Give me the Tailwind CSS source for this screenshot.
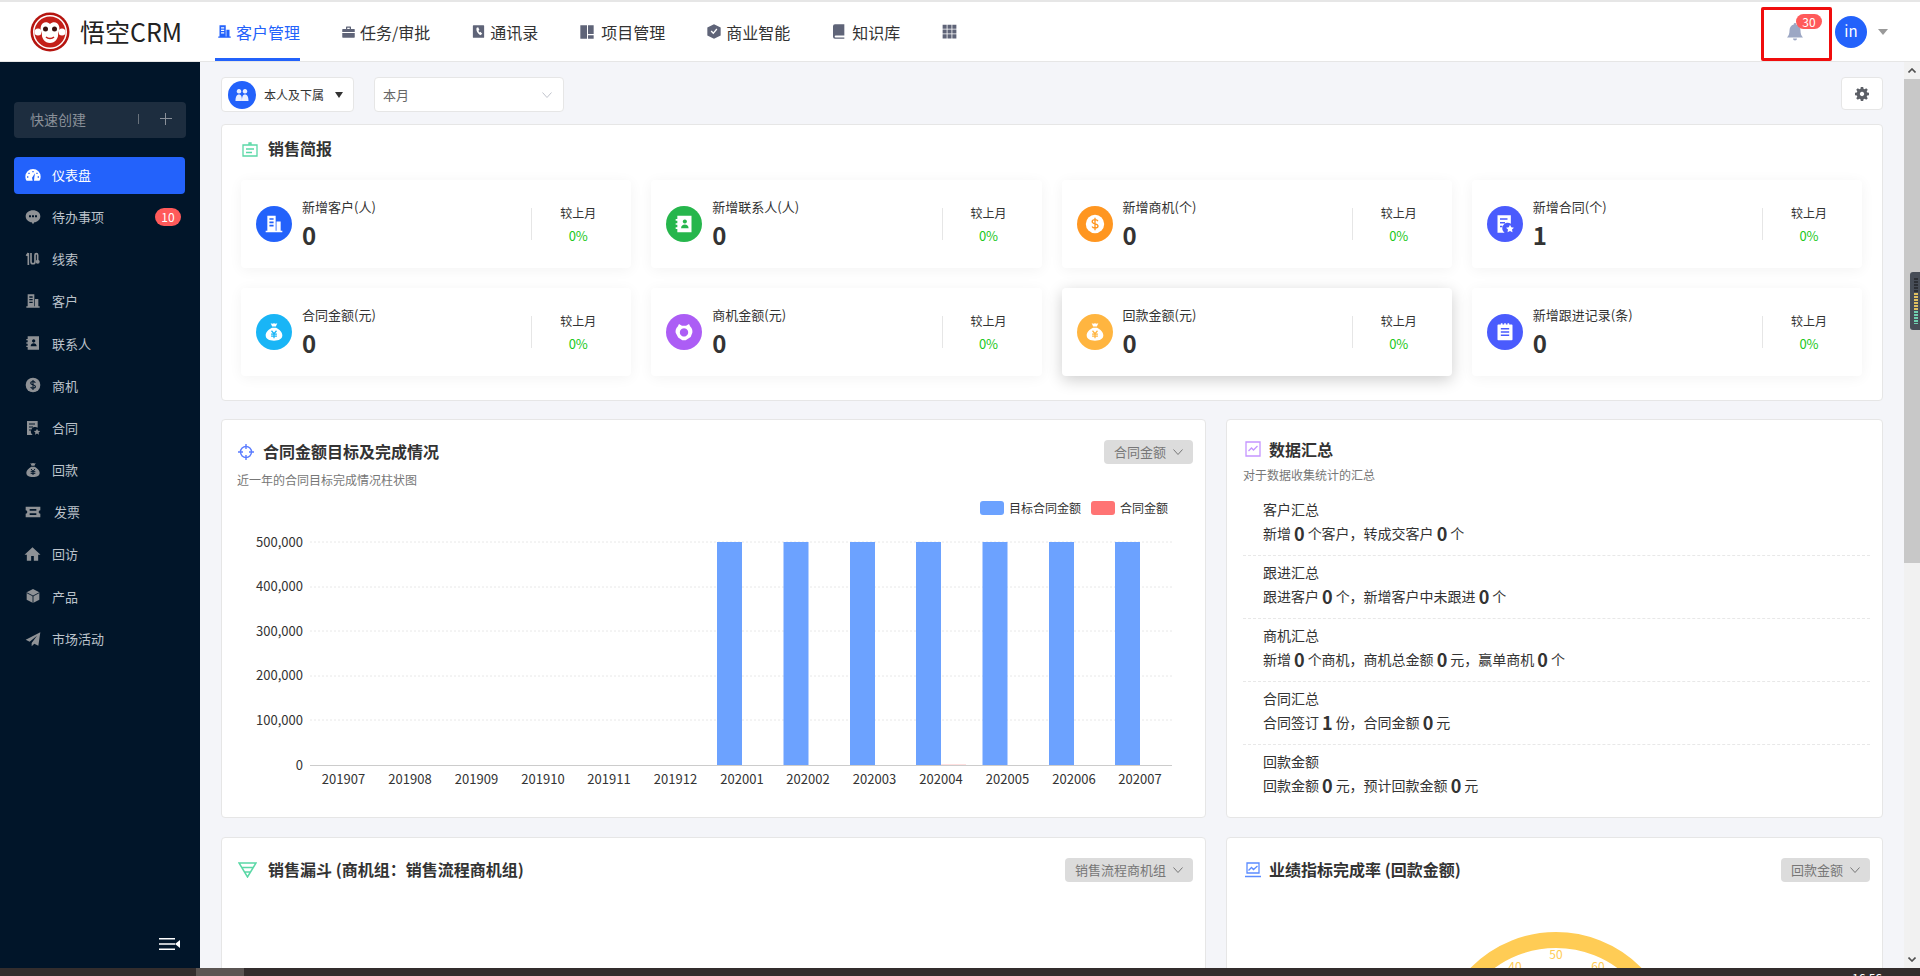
<!DOCTYPE html>
<html lang="zh-CN">
<head>
    <meta charset="UTF-8">
    <title>悟空CRM - 仪表盘</title>
    <script src="https://cdn.jsdelivr.net/npm/@tailwindcss/browser@4"></script>
</head>
<body class="overflow-hidden">
    <!-- shared icons -->
    <svg class="hidden">
        <symbol id="i-building" viewBox="0 0 24 24"><path fill-rule="evenodd" d="M4 2h10v18H4zM6.500 5v2h5V5zM6.500 9v2h5V9zM6.500 13v2h5v-2zM15 9h5v11h-5zM2 20h20v2H2z"/></symbol>
        <symbol id="i-case" viewBox="0 0 24 24"><path fill-rule="evenodd" d="M8 7V4a1 1 0 0 1 1-1h6a1 1 0 0 1 1 1v3h5a1 1 0 0 1 1 1v12a1 1 0 0 1-1 1H3a1 1 0 0 1-1-1V8a1 1 0 0 1 1-1zM10 5v2h4V5zM2 12h20v1.500H2z"/></symbol>
        <symbol id="i-phonebook" viewBox="0 0 24 24"><path fill-rule="evenodd" d="M4 2h16a1 1 0 0 1 1 1v18a1 1 0 0 1-1 1H4a1 1 0 0 1-1-1V3a1 1 0 0 1 1-1zM9 6c-1 3 0 8 6 12l3-2.500-3-3-1.500 1c-1-1-1.500-2-1.500-3l1.500-1L11.500 5z"/></symbol>
        <symbol id="i-board" viewBox="0 0 24 24"><path d="M2 2h10v20H2zM13.500 2H22v13h-8.500zM13.500 17H22v5h-8.500z"/></symbol>
        <symbol id="i-shield" viewBox="0 0 24 24"><path fill-rule="evenodd" d="M12 1l10 5v12l-10 5-10-5V6zM7 12l4 4 6-7-1.500-1.500L11 13l-2.500-2.500z"/></symbol>
        <symbol id="i-book" viewBox="0 0 24 24"><path d="M6 1h14v17H7a1.500 1.500 0 0 0 0 3h13v2H6a3 3 0 0 1-3-3V4a3 3 0 0 1 3-3z"/></symbol>
        <symbol id="i-grid" viewBox="0 0 24 24"><path d="M1 1h6.500v6.500H1zM8.750 1h6.500v6.500h-6.500zM16.500 1H23v6.500h-6.500zM1 8.750h6.500v6.500H1zM8.750 8.750h6.500v6.500h-6.500zM16.500 8.750H23v6.500h-6.500zM1 16.500h6.500V23H1zM8.750 16.500h6.500V23h-6.500zM16.500 16.500H23V23h-6.500z"/></symbol>
        <symbol id="i-gauge" viewBox="0 0 24 24"><path fill-rule="evenodd" d="M12 3a11.500 11.500 0 0 1 11.500 11.500c0 2.300-.6 4.300-1.800 6H2.300A11 11 0 0 1 .500 14.500 11.500 11.500 0 0 1 12 3zM11 6v2h2V6zM5 8.500v2h2v-2zM17 8.500v2h2v-2zM3 14v2h2v-2zM19 14v2h2v-2zM15 9.500l-4.500 6.500 1 4.500h2l.5-5z"/></symbol>
        <symbol id="i-chat" viewBox="0 0 24 24"><path fill-rule="evenodd" d="M12 2c6 0 11 3.800 11 9s-5 9-9 9l-2 3-2-3c-4 0-9-3.800-9-9s5-9 11-9zM6 9.500v3h3v-3zM10.500 9.500v3h3v-3zM15 9.500v3h3v-3z"/></symbol>
        <symbol id="i-clue" viewBox="0 0 24 24"><path fill="none" stroke="currentColor" stroke-width="2.500" d="M5 3v18M2 7l3-4M9 3v13a3 3 0 0 0 6 0V6a2 2 0 0 1 4 0v8"/><circle cx="19" cy="16" r="3"/></symbol>
        <symbol id="i-contact" viewBox="0 0 24 24"><path fill-rule="evenodd" d="M4 2h17v20H4zM13 6.500a2.500 2.500 0 1 0 .01 0zM8.500 17c0-3 2-4.500 4.500-4.500s4.500 1.500 4.500 4.500z"/><path d="M2 6h3.500v2H2zM2 11h3.500v2H2zM2 16h3.500v2H2z" stroke="none"/></symbol>
        <symbol id="i-dollar" viewBox="0 0 24 24"><circle cx="12" cy="12" r="11" stroke="none"/><path fill="none" stroke-width="1.600" d="M15.500 8.500c-.5-1-1.700-1.700-3.500-1.700-2 0-3.400 1-3.400 2.500 0 3.200 7 1.700 7 5 0 1.500-1.400 2.500-3.600 2.500-1.800 0-3-.7-3.500-1.800M12 4.500v15"/></symbol>
        <symbol id="i-bag" viewBox="0 0 24 24"><path stroke="none" d="M8 1.500c1.500.8 2.500.8 4 0 1.500.8 2.500.8 4 0l-1.800 4h-4.400zM9.500 7h5C18.500 9 22 12.500 22 16c0 4.500-4 6.500-10 6.500S2 20.500 2 16c0-3.500 3.500-7 7.500-9z"/><path fill="none" stroke-width="1.500" d="M9 10.500l3 3.500 3-3.500M12 14v5.500M8.500 14.500h7M8.500 17h7"/></symbol>
        <symbol id="i-contract" viewBox="0 0 24 24"><path stroke="none" d="M3 1.500h16v10.200a6.500 6.500 0 0 0-7.500 10.800H3z"/><path fill="none" stroke-width="1.800" d="M6 6h9M6 10.500h6M6 15h3"/><path stroke="none" d="M18 13l1.500 3 3.300.4-2.400 2.300.6 3.300-3-1.600-3 1.600.6-3.300-2.400-2.300 3.300-.4z"/></symbol>
        <symbol id="i-ticket" viewBox="0 0 24 24"><path fill-rule="evenodd" d="M1 4h22v5.500a2.500 2.500 0 0 0 0 5V20H1v-5.500a2.500 2.500 0 0 0 0-5zM7 7.500V10h10V7.500zM7 14v2.500h10V14z"/></symbol>
        <symbol id="i-home" viewBox="0 0 24 24"><path fill-rule="evenodd" d="M12 2 0 13h3.500v9h17v-9H24zM10 15h4v7h-4z"/></symbol>
        <symbol id="i-box" viewBox="0 0 24 24"><path stroke="none" d="M12 1.500l9.500 5v11L12 22.500l-9.500-5v-11z"/><path fill="none" stroke-width="1.300" d="M2.500 7l9.500 5 9.500-5M12 12v10.500"/></symbol>
        <symbol id="i-plane" viewBox="0 0 24 24"><path d="M23 2 1 13l6 3 11-9-8 11v5l4-4 6 3z"/></symbol>
        <symbol id="i-opp" viewBox="0 0 24 24"><path fill-rule="evenodd" d="M6 2.500l3.500 2h5l3.500-2 1.500 3c2 2 3 4.500 2.500 7.500l-2 5-6 4h-4l-5-3.500-3-5.500c-.5-3 .5-5.500 2.500-7.500zM12 7.500a5 5 0 1 0 .01 0z"/></symbol>
        <symbol id="i-list" viewBox="0 0 24 24"><path stroke="none" d="M4 3h3V1.500h2V3h2V1.500h2V3h2V1.500h2V3h3a1 1 0 0 1 1 1v17a1 1 0 0 1-1 1H4a1 1 0 0 1-1-1V4a1 1 0 0 1 1-1z"/><path fill="none" stroke-width="1.800" d="M7 8h10M7 12h10M7 16h10"/></symbol>
    </svg>

    <div class="relative w-[1920px] h-[976px] overflow-hidden flex flex-col bg-[#f4f5f9] text-[#333] font-['Noto_Sans_CJK_SC','Noto_Sans',sans-serif]">
        <div class="h-[2px] bg-[#e6e6e6]"></div>

        <!-- top nav -->
        <header class="relative h-[60px] bg-white border-b border-[#e6e6e6] flex items-center">
            <div class="flex items-center pl-[30px] w-[215px] h-full">
                <svg width="40" height="40" viewBox="0 0 40 40">
                    <circle cx="20" cy="20" r="19.500" fill="#b5140f"/>
                    <circle cx="20" cy="20" r="17" fill="#fff"/>
                    <circle cx="20" cy="20" r="15.500" fill="#c4201a"/>
                    <circle cx="8" cy="20" r="3.500" fill="#fff"/>
                    <circle cx="32" cy="20" r="3.500" fill="#fff"/>
                    <path d="M20 12c3-3 8-2 9 2 1 3 0 5-1 7 1 5-3 10-8 10s-9-5-8-10c-1-2-2-4-1-7 1-4 6-5 9-2z" fill="#fff"/>
                    <circle cx="15.500" cy="17" r="2.500" fill="#3a1210"/>
                    <circle cx="24.500" cy="17" r="2.500" fill="#3a1210"/>
                    <path d="M16 25c2 2 6 2 8 0" fill="none" stroke="#c4201a" stroke-width="1.500"/>
                </svg>
                <span class="ml-[10px] text-[25px] leading-none text-[#222]">悟空CRM</span>
            </div>
            <nav class="flex items-center h-full gap-[41px] text-[16px]">
                <a class="relative h-full flex items-center w-[85px] pl-[2px] text-[#2362fb]">
                    <svg class="w-[15px] h-[17px] mr-[4px]" fill="currentColor"><use href="#i-building"/></svg>客户管理
                    <span class="absolute left-0 right-0 bottom-0 h-[3px] bg-[#2362fb]"></span>
                </a>
                <a class="flex items-center"><svg class="w-[15px] h-[16px] mr-[4px] text-[#5f6478]" fill="currentColor"><use href="#i-case"/></svg>任务/审批</a>
                <a class="flex items-center"><svg class="w-[15px] h-[17px] mr-[4px] text-[#5f6478]" fill="currentColor"><use href="#i-phonebook"/></svg>通讯录</a>
                <a class="flex items-center"><svg class="w-[16px] h-[16px] mr-[6px] text-[#5f6478]" fill="currentColor"><use href="#i-board"/></svg>项目管理</a>
                <a class="flex items-center"><svg class="w-[16px] h-[17px] mr-[4px] text-[#5f6478]" fill="currentColor"><use href="#i-shield"/></svg>商业智能</a>
                <a class="flex items-center"><svg class="w-[16px] h-[17px] mr-[5px] text-[#5f6478]" fill="currentColor"><use href="#i-book"/></svg>知识库</a>
                <svg class="ml-[1px] w-[15px] h-[15px] text-[#5f6478]" fill="currentColor"><use href="#i-grid"/></svg>
            </nav>
            <div class="ml-auto flex items-center pr-[32px]">
                <div class="relative w-[16px] h-[18px] mr-[32px]">
                    <svg class="w-[16px] h-[18px] text-[#9ca7c4]" viewBox="0 0 16 18" fill="currentColor"><path d="M8 0a1.200 1.200 0 0 1 1.200 1.400C12 2 13.500 4.500 13.500 7.500c0 3 .7 5 2.500 7H0c1.800-2 2.500-4 2.500-7 0-3 1.500-5.500 4.300-6.100A1.200 1.200 0 0 1 8 0zM6 15.500h4a2 2 0 0 1-4 0z"/></svg>
                    <span class="absolute left-[9px] top-[-9px] w-[26px] h-[15px] rounded-full bg-[#ff5a5a] text-white text-[12px] leading-[15px] text-center">30</span>
                </div>
                <div class="w-8 h-8 rounded-full bg-[#2362fb] text-white text-[15px] flex items-center justify-center">in</div>
                <span class="ml-[11px] w-0 h-0 border-x-[5px] border-x-transparent border-t-[6px] border-t-[#999]"></span>
            </div>
            <!-- red marker round the bell -->
            <div class="absolute left-[1761px] top-[5px] w-[71px] h-[54px] border-[3px] border-[#f00d0d] rounded-[2px]"></div>
        </header>

        <div class="flex flex-1 min-h-0">
            <!-- sidebar -->
            <aside class="w-[200px] bg-[#011529] flex flex-col pt-[40px]">
                <div class="mx-[14px] h-[36px] rounded-[4px] bg-[#1d2d3f] flex items-center pl-[16px] pb-[2px] text-[14px] text-[#8a9099]">
                    快速创建
                    <span class="ml-[52px] w-px h-[10px] bg-[#69727c]"></span>
                    <span class="ml-[21px] w-[12px] h-[12px] relative">
                        <span class="absolute left-0 right-0 top-[5px] h-px bg-[#8a9099]"></span>
                        <span class="absolute top-0 bottom-0 left-[5px] w-px bg-[#8a9099]"></span>
                    </span>
                </div>
                <ul class="mt-[19px] mx-[14px] flex flex-col gap-[5.2px] text-[13px] text-[#bcc3cb]">
                    <li class="h-[37px] pb-[2px] w-[171px] rounded-[4px] bg-[#2362fb] text-white flex items-center pl-[11px]"><svg class="w-[16px] h-[16px] mr-[11px]" fill="currentColor"><use href="#i-gauge"/></svg>仪表盘</li>
                    <li class="h-[37px] pb-[2px] flex items-center pl-[11px]"><svg class="w-[16px] h-[16px] mr-[11px] text-[#8f9296]" fill="currentColor"><use href="#i-chat"/></svg>待办事项<span class="ml-auto mr-[5px] w-[26px] h-[18px] rounded-full bg-[#ff5a5a] text-white text-[12px] leading-[18px] text-center">10</span></li>
                    <li class="h-[37px] pb-[2px] flex items-center pl-[11px]"><svg class="w-[16px] h-[16px] mr-[11px] text-[#8f9296]" fill="currentColor"><use href="#i-clue"/></svg>线索</li>
                    <li class="h-[37px] pb-[2px] flex items-center pl-[11px]"><svg class="w-[16px] h-[16px] mr-[11px] text-[#8f9296]" fill="currentColor"><use href="#i-building"/></svg>客户</li>
                    <li class="h-[37px] pb-[2px] flex items-center pl-[11px]"><svg class="w-[16px] h-[16px] mr-[11px] text-[#8f9296]" fill="currentColor"><use href="#i-contact"/></svg>联系人</li>
                    <li class="h-[37px] pb-[2px] flex items-center pl-[11px]"><svg class="w-[16px] h-[16px] mr-[11px] text-[#8f9296] stroke-[#011529]" fill="currentColor"><use href="#i-dollar"/></svg>商机</li>
                    <li class="h-[37px] pb-[2px] flex items-center pl-[11px]"><svg class="w-[16px] h-[16px] mr-[11px] text-[#8f9296] stroke-[#011529]" fill="currentColor"><use href="#i-contract"/></svg>合同</li>
                    <li class="h-[37px] pb-[2px] flex items-center pl-[11px]"><svg class="w-[16px] h-[16px] mr-[11px] text-[#8f9296] stroke-[#011529]" fill="currentColor"><use href="#i-bag"/></svg>回款</li>
                    <li class="h-[37px] pb-[2px] flex items-center pl-[11px]"><svg class="w-[16px] h-[16px] mr-[13px] text-[#8f9296]" fill="currentColor"><use href="#i-ticket"/></svg>发票</li>
                    <li class="h-[37px] pb-[2px] flex items-center pl-[10px]"><svg class="w-[17px] h-[16px] mr-[11px] text-[#8f9296]" fill="currentColor"><use href="#i-home"/></svg>回访</li>
                    <li class="h-[37px] pb-[2px] flex items-center pl-[11px]"><svg class="w-[16px] h-[16px] mr-[11px] text-[#8f9296] stroke-[#011529]" fill="currentColor"><use href="#i-box"/></svg>产品</li>
                    <li class="h-[37px] pb-[2px] flex items-center pl-[11px]"><svg class="w-[16px] h-[16px] mr-[11px] text-[#8f9296]" fill="currentColor"><use href="#i-plane"/></svg>市场活动</li>
                </ul>
                <div class="mt-auto flex justify-end pr-[20px] pb-[18px]">
                    <svg width="21" height="12" viewBox="0 0 21 12" fill="#fff"><path d="M0 0h16v1.600H0zM0 5.200h16v1.600H0zM0 10.400h16V12H0zM21 2v8l-5-4z"/></svg>
                </div>
            </aside>

            <!-- main -->
            <main class="flex-1 min-w-0 overflow-hidden px-[21px] pt-[15px]">
                <div class="flex items-start">
                    <div class="w-[133px] h-[35px] bg-white border border-[#e6e6e6] rounded-[4px] flex items-center pl-[6px]">
                        <span class="w-[28px] h-[28px] rounded-full bg-[#2362fb] flex items-center justify-center">
                            <svg width="16" height="16" viewBox="0 0 16 16" fill="#e8eeff"><path d="M5 2a2.300 2.300 0 1 1-.01 0zM11 2a2.300 2.300 0 1 1-.01 0zM1.500 14c0-4 1-6.500 3.500-6.500S8 10 8 14zM8 14c0-4 .5-6.500 3-6.500s3.500 2.500 3.500 6.500z"/></svg>
                        </span>
                        <span class="ml-[8px] text-[12px]">本人及下属</span>
                        <span class="ml-[11px] w-0 h-0 border-x-[4px] border-x-transparent border-t-[6px] border-t-[#333]"></span>
                    </div>
                    <div class="ml-[20px] w-[190px] h-[35px] bg-white border border-[#e6e6e6] rounded-[4px] flex items-center pl-[8px] pr-[11px] text-[13px] text-[#666]">
                        本月
                        <svg class="ml-auto" width="10" height="6" viewBox="0 0 10 6" fill="none" stroke="#c0c4cc"><path d="M.500.500 5 5.500 9.500.500"/></svg>
                    </div>
                    <div class="ml-auto w-[42px] h-[33px] bg-white border border-[#e6e6e6] rounded-[4px] flex items-center justify-center">
                        <svg width="14" height="14" viewBox="0 0 14 14" fill="#5c5f66" fill-rule="evenodd"><path d="M5.800 0h2.400l.3 1.800 1.200.5L11.200 1.200 12.800 2.800l-1.100 1.500.5 1.200 1.800.3v2.400l-1.800.3-.5 1.200 1.100 1.500-1.600 1.600-1.500-1.100-1.200.5-.3 1.800H5.800l-.3-1.800-1.200-.5-1.500 1.100-1.600-1.600 1.100-1.500-.5-1.200L0 8.200V5.800l1.800-.3.500-1.200-1.100-1.500L2.800 1.200l1.500 1.100 1.200-.5zM7 4.800a2.200 2.200 0 1 0 .01 0z"/></svg>
                    </div>
                </div>

                <!-- 销售简报 -->
                <section class="mt-[12px] h-[277px] bg-white border border-[#e6e6e6] rounded-[4px] pl-[19px] pr-[20px] pt-[12px]">
                    <div class="h-[24px] flex items-center pl-[1px]">
                        <svg width="16" height="15" viewBox="0 0 16 15" fill="none" stroke="#5ad8a6" stroke-width="1.300"><path d="M1 3h14v11H1zM7 3V1h2v2M4 7h8M4 10.500h6"/></svg>
                        <h2 class="ml-[10px] -mt-[2px] text-[16px] font-bold">销售简报</h2>
                    </div>
                    <div class="mt-[19px] grid grid-cols-4 gap-5">
                        <div class="h-[88px] bg-white rounded-[4px] shadow-[0_2px_14px_rgba(0,0,0,0.05)] flex items-center pl-[15px]">
                            <span class="w-9 h-9 rounded-full bg-[#2362fb] flex items-center justify-center"><svg class="w-5 h-5 text-white" fill="currentColor"><use href="#i-building"/></svg></span>
                            <div class="ml-[10px] flex-1"><p class="text-[13px] leading-[20px]">新增客户(人)</p><p class="mt-px text-[24px] leading-[34px] font-bold">0</p></div>
                            <span class="w-px h-8 bg-[#e6e6e6]"></span>
                            <div class="w-[92px] mr-[7px] text-center text-[12px]"><p class="leading-[20px]">较上月</p><p class="mt-[3px] text-[13px] leading-[20px] text-[#20c820]">0%</p></div>
                        </div>
                        <div class="h-[88px] bg-white rounded-[4px] shadow-[0_2px_14px_rgba(0,0,0,0.05)] flex items-center pl-[15px]">
                            <span class="w-9 h-9 rounded-full bg-[#26b64c] flex items-center justify-center"><svg class="w-5 h-5 text-white" fill="currentColor"><use href="#i-contact"/></svg></span>
                            <div class="ml-[10px] flex-1"><p class="text-[13px] leading-[20px]">新增联系人(人)</p><p class="mt-px text-[24px] leading-[34px] font-bold">0</p></div>
                            <span class="w-px h-8 bg-[#e6e6e6]"></span>
                            <div class="w-[92px] mr-[7px] text-center text-[12px]"><p class="leading-[20px]">较上月</p><p class="mt-[3px] text-[13px] leading-[20px] text-[#20c820]">0%</p></div>
                        </div>
                        <div class="h-[88px] bg-white rounded-[4px] shadow-[0_2px_14px_rgba(0,0,0,0.05)] flex items-center pl-[15px]">
                            <span class="w-9 h-9 rounded-full bg-[#ff9620] flex items-center justify-center"><svg class="w-5 h-5 text-white stroke-[#ff9620]" fill="currentColor"><use href="#i-dollar"/></svg></span>
                            <div class="ml-[10px] flex-1"><p class="text-[13px] leading-[20px]">新增商机(个)</p><p class="mt-px text-[24px] leading-[34px] font-bold">0</p></div>
                            <span class="w-px h-8 bg-[#e6e6e6]"></span>
                            <div class="w-[92px] mr-[7px] text-center text-[12px]"><p class="leading-[20px]">较上月</p><p class="mt-[3px] text-[13px] leading-[20px] text-[#20c820]">0%</p></div>
                        </div>
                        <div class="h-[88px] bg-white rounded-[4px] shadow-[0_2px_14px_rgba(0,0,0,0.05)] flex items-center pl-[15px]">
                            <span class="w-9 h-9 rounded-full bg-[#4a5bfd] flex items-center justify-center"><svg class="w-5 h-5 text-white stroke-[#4a5bfd]" fill="currentColor"><use href="#i-contract"/></svg></span>
                            <div class="ml-[10px] flex-1"><p class="text-[13px] leading-[20px]">新增合同(个)</p><p class="mt-px text-[24px] leading-[34px] font-bold">1</p></div>
                            <span class="w-px h-8 bg-[#e6e6e6]"></span>
                            <div class="w-[92px] mr-[7px] text-center text-[12px]"><p class="leading-[20px]">较上月</p><p class="mt-[3px] text-[13px] leading-[20px] text-[#20c820]">0%</p></div>
                        </div>
                        <div class="h-[88px] bg-white rounded-[4px] shadow-[0_2px_14px_rgba(0,0,0,0.05)] flex items-center pl-[15px]">
                            <span class="w-9 h-9 rounded-full bg-[#19b5f6] flex items-center justify-center"><svg class="w-5 h-5 text-white stroke-[#19b5f6]" fill="currentColor"><use href="#i-bag"/></svg></span>
                            <div class="ml-[10px] flex-1"><p class="text-[13px] leading-[20px]">合同金额(元)</p><p class="mt-px text-[24px] leading-[34px] font-bold">0</p></div>
                            <span class="w-px h-8 bg-[#e6e6e6]"></span>
                            <div class="w-[92px] mr-[7px] text-center text-[12px]"><p class="leading-[20px]">较上月</p><p class="mt-[3px] text-[13px] leading-[20px] text-[#20c820]">0%</p></div>
                        </div>
                        <div class="h-[88px] bg-white rounded-[4px] shadow-[0_2px_14px_rgba(0,0,0,0.05)] flex items-center pl-[15px]">
                            <span class="w-9 h-9 rounded-full bg-[#ac5df5] flex items-center justify-center"><svg class="w-5 h-5 text-white" fill="currentColor"><use href="#i-opp"/></svg></span>
                            <div class="ml-[10px] flex-1"><p class="text-[13px] leading-[20px]">商机金额(元)</p><p class="mt-px text-[24px] leading-[34px] font-bold">0</p></div>
                            <span class="w-px h-8 bg-[#e6e6e6]"></span>
                            <div class="w-[92px] mr-[7px] text-center text-[12px]"><p class="leading-[20px]">较上月</p><p class="mt-[3px] text-[13px] leading-[20px] text-[#20c820]">0%</p></div>
                        </div>
                        <div class="h-[88px] bg-white rounded-[4px] shadow-[0_4px_16px_rgba(0,0,0,0.2)] flex items-center pl-[15px]">
                            <span class="w-9 h-9 rounded-full bg-[#ffb540] flex items-center justify-center"><svg class="w-5 h-5 text-white stroke-[#ffb540]" fill="currentColor"><use href="#i-bag"/></svg></span>
                            <div class="ml-[10px] flex-1"><p class="text-[13px] leading-[20px]">回款金额(元)</p><p class="mt-px text-[24px] leading-[34px] font-bold">0</p></div>
                            <span class="w-px h-8 bg-[#e6e6e6]"></span>
                            <div class="w-[92px] mr-[7px] text-center text-[12px]"><p class="leading-[20px]">较上月</p><p class="mt-[3px] text-[13px] leading-[20px] text-[#20c820]">0%</p></div>
                        </div>
                        <div class="h-[88px] bg-white rounded-[4px] shadow-[0_2px_14px_rgba(0,0,0,0.05)] flex items-center pl-[15px]">
                            <span class="w-9 h-9 rounded-full bg-[#4a5bfd] flex items-center justify-center"><svg class="w-5 h-5 text-white stroke-[#4a5bfd]" fill="currentColor"><use href="#i-list"/></svg></span>
                            <div class="ml-[10px] flex-1"><p class="text-[13px] leading-[20px]">新增跟进记录(条)</p><p class="mt-px text-[24px] leading-[34px] font-bold">0</p></div>
                            <span class="w-px h-8 bg-[#e6e6e6]"></span>
                            <div class="w-[92px] mr-[7px] text-center text-[12px]"><p class="leading-[20px]">较上月</p><p class="mt-[3px] text-[13px] leading-[20px] text-[#20c820]">0%</p></div>
                        </div>
                    </div>
                </section>

                <div class="mt-[18px] grid grid-cols-[985px_657px] gap-x-[20px] gap-y-[19px]">
                    <!-- 合同金额目标 -->
                    <section class="h-[399px] bg-white border border-[#e6e6e6] rounded-[4px] pt-[20px]">
                        <div class="h-[24px] flex items-center pl-[16px] pr-[12px]">
                            <svg width="16" height="16" viewBox="0 0 16 16" fill="none" stroke="#5b7cff" stroke-width="1.400"><circle cx="8" cy="8" r="5.500"/><path d="M8 0v5M8 11v5M0 8h5M11 8h5"/></svg>
                            <h2 class="ml-[9px] -mt-[2px] text-[16px] font-bold">合同金额目标及完成情况</h2>
                            <div class="ml-auto h-[24px] rounded-[4px] bg-[#dcdcdc] flex items-center px-[10px] gap-[7px] text-[13px] text-[#777]">合同金额
                                <svg width="10" height="6" viewBox="0 0 10 6" fill="none" stroke="#777"><path d="M.500.500 5 5.500 9.500.500"/></svg>
                            </div>
                        </div>
                        <p class="mt-[8px] pl-[15px] text-[12px] leading-[16px] text-[#777]">近一年的合同目标完成情况柱状图</p>
                        <div class="mt-[13px] h-[14px] flex justify-end items-center pr-[37px] text-[12px]">
                            <span class="w-6 h-[14px] rounded-[3px] bg-[#6ca2ff]"></span><span class="ml-[5px]">目标合同金额</span>
                            <span class="ml-[10px] w-6 h-[14px] rounded-[3px] bg-[#ff7474]"></span><span class="ml-[5px]">合同金额</span>
                        </div>
                        <!-- viewBox uses page coordinates -->
                        <svg class="block" width="983" height="281" viewBox="222 515 983 281" font-size="13" fill="#333">
                            <g stroke="#e8e8e8" stroke-dasharray="2 2">
                                <path d="M310 542H1172M310 587H1172M310 631H1172M310 676H1172M310 720H1172"/>
                            </g>
                            <path d="M310 765.500H1172" stroke="#ccc"/>
                            <g fill="#6ca2ff">
                                <rect x="717" y="542" width="25" height="223"/>
                                <rect x="783.500" y="542" width="25" height="223"/>
                                <rect x="850" y="542" width="25" height="223"/>
                                <rect x="916" y="542" width="25" height="223"/>
                                <rect x="982.500" y="542" width="25" height="223"/>
                                <rect x="1049" y="542" width="25" height="223"/>
                                <rect x="1115" y="542" width="25" height="223"/>
                            </g>
                            <rect x="941" y="764" width="25" height="1" fill="#ffe0e0"/>
                            <g text-anchor="end">
                                <text x="303" y="547">500,000</text>
                                <text x="303" y="591">400,000</text>
                                <text x="303" y="636">300,000</text>
                                <text x="303" y="680">200,000</text>
                                <text x="303" y="725">100,000</text>
                                <text x="303" y="770">0</text>
                            </g>
                            <g text-anchor="middle">
                                <text x="343.500" y="784">201907</text>
                                <text x="410" y="784">201908</text>
                                <text x="476.500" y="784">201909</text>
                                <text x="543" y="784">201910</text>
                                <text x="609" y="784">201911</text>
                                <text x="675.500" y="784">201912</text>
                                <text x="742" y="784">202001</text>
                                <text x="808" y="784">202002</text>
                                <text x="874.500" y="784">202003</text>
                                <text x="941" y="784">202004</text>
                                <text x="1007.500" y="784">202005</text>
                                <text x="1074" y="784">202006</text>
                                <text x="1140" y="784">202007</text>
                            </g>
                        </svg>
                    </section>

                    <!-- 数据汇总 -->
                    <section class="h-[399px] bg-white border border-[#e6e6e6] rounded-[4px] pt-[17px] pl-[16px] pr-[12px]">
                        <div class="h-[24px] flex items-center pl-[2px]">
                            <svg width="16" height="16" viewBox="0 0 16 16" fill="none" stroke="#c595ff" stroke-width="1.300"><path d="M1 1h14v14H1zM3.500 10l3-3 2 2 4-4"/></svg>
                            <h2 class="ml-[8px] text-[16px] font-bold">数据汇总</h2>
                        </div>
                        <p class="mt-[6px] text-[12px] leading-[16px] text-[#777]">对于数据收集统计的汇总</p>
                        <div class="mt-[10px] text-[14px] leading-[24px]">
                            <div class="pl-[20px] pt-[4px] pb-[10px] border-b border-dashed border-[#e8e8e8]">
                                <p>客户汇总</p>
                                <p class="flex items-center">新增<b class="mx-[3px] text-[18px]">0</b>个客户，转成交客户<b class="mx-[3px] text-[18px]">0</b>个</p>
                            </div>
                            <div class="pl-[20px] pt-[4px] pb-[10px] border-b border-dashed border-[#e8e8e8]">
                                <p>跟进汇总</p>
                                <p class="flex items-center">跟进客户<b class="mx-[3px] text-[18px]">0</b>个，新增客户中未跟进<b class="mx-[3px] text-[18px]">0</b>个</p>
                            </div>
                            <div class="pl-[20px] pt-[4px] pb-[10px] border-b border-dashed border-[#e8e8e8]">
                                <p>商机汇总</p>
                                <p class="flex items-center">新增<b class="mx-[3px] text-[18px]">0</b>个商机，商机总金额<b class="mx-[3px] text-[18px]">0</b>元，赢单商机<b class="mx-[3px] text-[18px]">0</b>个</p>
                            </div>
                            <div class="pl-[20px] pt-[4px] pb-[10px] border-b border-dashed border-[#e8e8e8]">
                                <p>合同汇总</p>
                                <p class="flex items-center">合同签订<b class="mx-[3px] text-[18px]">1</b>份，合同金额<b class="mx-[3px] text-[18px]">0</b>元</p>
                            </div>
                            <div class="pl-[20px] pt-[4px]">
                                <p>回款金额</p>
                                <p class="flex items-center">回款金额<b class="mx-[3px] text-[18px]">0</b>元，预计回款金额<b class="mx-[3px] text-[18px]">0</b>元</p>
                            </div>
                        </div>
                    </section>

                    <!-- 销售漏斗 -->
                    <section class="h-[300px] bg-white border border-[#e6e6e6] rounded-[4px] pt-[20px]">
                        <div class="h-[24px] flex items-center pl-[16px] pr-[12px]">
                            <svg width="19" height="16" viewBox="0 0 19 16" fill="none" stroke="#5ad8a6" stroke-width="1.500"><path d="M1 1h17L9.500 15zM3.500 5.500h12M6 10h7"/></svg>
                            <h2 class="ml-[11px] -mt-[2px] text-[16px] font-bold">销售漏斗 (商机组：销售流程商机组)</h2>
                            <div class="ml-auto h-[24px] rounded-[4px] bg-[#dcdcdc] flex items-center px-[10px] gap-[7px] text-[13px] text-[#777]">销售流程商机组
                                <svg width="10" height="6" viewBox="0 0 10 6" fill="none" stroke="#777"><path d="M.500.500 5 5.500 9.500.500"/></svg>
                            </div>
                        </div>
                    </section>

                    <!-- 业绩指标完成率 -->
                    <section class="h-[300px] bg-white border border-[#e6e6e6] rounded-[4px] pt-[20px]">
                        <div class="h-[24px] flex items-center pl-[18px] pr-[12px]">
                            <svg width="16" height="16" viewBox="0 0 16 16" fill="none" stroke="#5b8cff" stroke-width="1.300"><path d="M2 1h12v10H2zM0 14.500h16M3.500 8.500l3-3 2 2 4-3.500"/></svg>
                            <h2 class="ml-[8px] -mt-[2px] text-[16px] font-bold">业绩指标完成率 (回款金额)</h2>
                            <div class="ml-auto h-[24px] rounded-[4px] bg-[#dcdcdc] flex items-center px-[10px] gap-[7px] text-[13px] text-[#777]">回款金额
                                <svg width="10" height="6" viewBox="0 0 10 6" fill="none" stroke="#777"><path d="M.500.500 5 5.500 9.500.500"/></svg>
                            </div>
                        </div>
                        <svg class="block mt-[43px]" width="655" height="60" viewBox="1227 925 655 60" font-size="12" fill="#ffcc55" text-anchor="middle">
                            <circle cx="1556" cy="1052" r="112" fill="none" stroke="#ffcc55" stroke-width="16"/>
                            <text x="1556" y="959">50</text>
                            <text x="1515" y="971">40</text>
                            <text x="1598" y="971">60</text>
                        </svg>
                    </section>
                </div>
            </main>

            <!-- scrollbar -->
            <div class="w-4 bg-[#f1f1f1] flex flex-col items-center">
                <div class="h-[17px] flex items-center justify-center">
                    <svg width="8" height="5" viewBox="0 0 8 5" fill="none" stroke="#505050" stroke-width="1.600"><path d="M.500 4.500 4 1l3.500 3.500"/></svg>
                </div>
                <div class="w-full h-[484px] bg-[#c8c8c8]"></div>
                <div class="mt-auto h-[17px] flex items-center justify-center">
                    <svg width="8" height="5" viewBox="0 0 8 5" fill="none" stroke="#505050" stroke-width="1.600"><path d="M.500.500 4 4l3.500-3.500"/></svg>
                </div>
            </div>
        </div>

        <!-- strip of the taskbar at the bottom -->
        <div class="h-2 bg-[#332d2d] flex overflow-hidden shrink-0">
            <span class="ml-[196px] w-[48px] bg-[#5b5553]"></span>
            <span class="ml-auto mr-[38px] mt-[2px] text-[12px] leading-[16px] text-white">16:56</span>
        </div>

        <!-- floating widget at the window edge -->
        <div class="absolute left-[1910px] top-[272px] w-[10px] h-[58px] rounded-l-[3px] bg-[#474d57] pl-[4px] py-[6px]">
            <div class="relative w-[4px] h-[46px] bg-[linear-gradient(to_bottom,#2c2f35_0,#2c2f35_30%,#e0c060_30%,#e0c060_70%,#6fd0b0_70%)]">
                <div class="absolute inset-0 bg-[repeating-linear-gradient(to_bottom,transparent_0,transparent_2px,#474d57_2px,#474d57_3px)]"></div>
            </div>
        </div>
    </div>
</body>
</html>
